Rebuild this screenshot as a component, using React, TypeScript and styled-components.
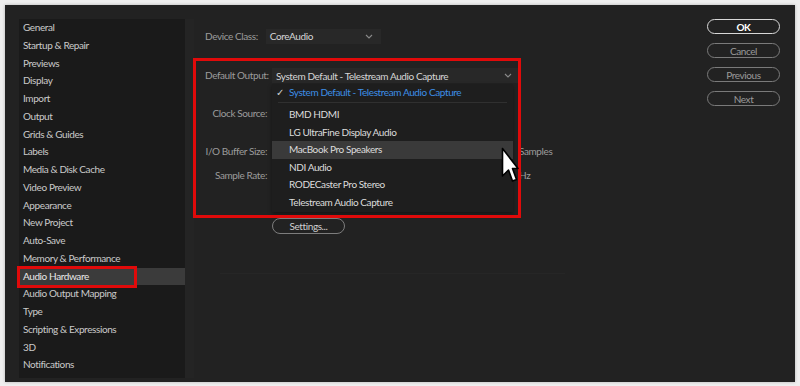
import styled, { createGlobalStyle } from "styled-components";

const GlobalStyle = createGlobalStyle`
  html, body {
    margin: 0;
    padding: 0;
    background: #efefef;
  }
  body {
    font-family: Lato, "Open Sans", "Noto Sans", sans-serif;
    letter-spacing: -0.4px;
    -webkit-font-smoothing: antialiased;
  }
`;

const sections = [
  "General",
  "Startup & Repair",
  "Previews",
  "Display",
  "Import",
  "Output",
  "Grids & Guides",
  "Labels",
  "Media & Disk Cache",
  "Video Preview",
  "Appearance",
  "New Project",
  "Auto-Save",
  "Memory & Performance",
  "Audio Hardware",
  "Audio Output Mapping",
  "Type",
  "Scripting & Expressions",
  "3D",
  "Notifications",
];

const devices = [
  "BMD HDMI",
  "LG UltraFine Display Audio",
  "MacBook Pro Speakers",
  "NDI Audio",
  "RODECaster Pro Stereo",
  "Telestream Audio Capture",
];

function Chevron() {
  return (
    <svg width="8" height="5" viewBox="0 0 8 5">
      <path d="M1 1 L4 4 L7 1" fill="none" stroke="#8a8a8a" strokeWidth="1.1" />
    </svg>
  );
}

function App() {
  const active = "Audio Hardware";
  const hovered = "MacBook Pro Speakers";

  return (
    <>
      <GlobalStyle />
      <Page>
        <Window>
          <Sidebar>
            {sections.map((s) => (
              <SideItem key={s} $active={s === active}>
                {s}
                {s === active && <SideMark />}
              </SideItem>
            ))}
          </Sidebar>

          <Content>
            <DeviceRow>
              <Label>Device Class:</Label>
              <Select $w={115}>
                <span>CoreAudio</span>
                <Chevron />
              </Select>
            </DeviceRow>

            <FormGrid>
              <FieldLabel>Default Output:</FieldLabel>
              <OutputCell>
                <Select $w={248}>
                  <span>System Default - Telestream Audio Capture</span>
                  <Chevron />
                </Select>
                <Menu>
                  <CheckedItem>
                    <Check>✓</Check>System Default - Telestream Audio Capture
                  </CheckedItem>
                  <MenuSep />
                  {devices.map((d) => (
                    <MenuItem key={d} $hover={d === hovered}>
                      {d}
                    </MenuItem>
                  ))}
                </Menu>
              </OutputCell>

              <FieldLabel $top={23}>Clock Source:</FieldLabel>
              <Spacer $top={23} />

              <FieldLabel $top={23}>I/O Buffer Size:</FieldLabel>
              <UnitCell $top={23}>Samples</UnitCell>

              <FieldLabel $top={9}>Sample Rate:</FieldLabel>
              <UnitCell $top={9}>Hz</UnitCell>
            </FormGrid>

            <SettingsButton>Settings...</SettingsButton>
            <FaintRule />

            <RedBox />
            <Cursor viewBox="0 0 18 36" width="18" height="36">
              <path
                d="M1.5 1.5 L1.5 29 L7.5 23 L11.5 34 L15.5 32.5 L11.5 21.5 L17 21.5 Z"
                fill="#ffffff"
                stroke="#000000"
                strokeWidth="1.6"
                strokeLinejoin="round"
              />
            </Cursor>
          </Content>

          <Buttons>
            <PillButton $primary>OK</PillButton>
            <PillButton>Cancel</PillButton>
            <PillButton>Previous</PillButton>
            <PillButton>Next</PillButton>
          </Buttons>
        </Window>
      </Page>
    </>
  );
}

export default App;

const Page = styled.div`
  width: 800px;
  height: 386px;
  padding: 5px 5px 4px 5px;
  box-sizing: border-box;
  display: flex;
`;

const Window = styled.div`
  flex: 1;
  display: flex;
  background: #222222;
  padding: 14px 14px 4px 14px;
  box-shadow: 0 0 3px rgba(0, 0, 0, 0.25);
  overflow: hidden;
`;

const Sidebar = styled.div`
  width: 166px;
  background: #1a1a1a;
  display: flex;
  flex-direction: column;
`;

const SideItem = styled.div<{ $active?: boolean }>`
  position: relative;
  height: 17.75px;
  line-height: 17.75px;
  padding-left: 4px;
  font-size: 10px;
  color: ${(p) => (p.$active ? "#e8e8e8" : "#cacaca")};
  background: ${(p) => (p.$active ? "#3b3b3b" : "transparent")};
  white-space: nowrap;
`;

const SideMark = styled.div`
  position: absolute;
  left: -2px;
  top: -2px;
  width: 114px;
  height: 16px;
  border: 3px solid #e00a0a;
`;

const Content = styled.div`
  flex: 1;
  position: relative;
  padding: 10px 0 0 11px;
  border-left: 9px solid #242424;
  font-size: 10px;
`;

const DeviceRow = styled.div`
  display: flex;
  align-items: center;
  gap: 8px;
  height: 14px;
`;

const Label = styled.div`
  color: #9c9c9c;
  font-size: 10px;
  white-space: nowrap;
`;

const Select = styled.div<{ $w: number }>`
  width: ${(p) => p.$w}px;
  height: 15px;
  box-sizing: border-box;
  padding: 0 8px 0 4px;
  background: #282828;
  color: #d6d6d6;
  font-size: 10px;
  display: flex;
  align-items: center;
  justify-content: space-between;
  white-space: nowrap;
`;

const FormGrid = styled.div`
  display: grid;
  grid-template-columns: 62px auto;
  column-gap: 5px;
  margin-top: 25px;
  align-items: center;
`;

const FieldLabel = styled(Label)<{ $top?: number }>`
  text-align: right;
  margin-top: ${(p) => p.$top || 0}px;
  height: 15px;
  line-height: 15px;
`;

const OutputCell = styled.div`
  position: relative;
  height: 15px;
`;

const Spacer = styled.div<{ $top?: number }>`
  margin-top: ${(p) => p.$top || 0}px;
  height: 15px;
`;

const UnitCell = styled.div<{ $top?: number }>`
  margin-top: ${(p) => p.$top || 0}px;
  height: 15px;
  line-height: 15px;
  padding-left: 247px;
  color: #9c9c9c;
  font-size: 10px;
`;

const Menu = styled.div`
  position: absolute;
  left: 0;
  top: 16px;
  width: 241px;
  height: 128px;
  background: #1e1e1e;
  box-shadow: 0 2px 4px rgba(0, 0, 0, 0.4);
  z-index: 2;
`;

const CheckedItem = styled.div`
  height: 17px;
  line-height: 17px;
  padding-left: 4px;
  color: #3d8ee6;
  font-size: 10px;
  white-space: nowrap;
`;

const Check = styled.span`
  display: inline-block;
  width: 13px;
  color: #cfcfcf;
  font-size: 10px;
`;

const MenuSep = styled.div`
  height: 1px;
  margin: 1px 6px 3px 6px;
  background: #303030;
`;

const MenuItem = styled.div<{ $hover?: boolean }>`
  height: 17.6px;
  line-height: 17.6px;
  padding-left: 17px;
  color: #dcdcdc;
  font-size: 10px;
  background: ${(p) => (p.$hover ? "#3a3a3a" : "transparent")};
  white-space: nowrap;
`;

const SettingsButton = styled.div`
  margin: 35px 0 0 67px;
  width: 73px;
  height: 16px;
  box-sizing: border-box;
  border: 1.5px solid #7d7d7d;
  border-radius: 8px;
  color: #d0d0d0;
  font-size: 10px;
  display: flex;
  align-items: center;
  justify-content: center;
`;

const FaintRule = styled.div`
  margin: 39px 0 0 15px;
  width: 345px;
  height: 1px;
  background: #262626;
`;

const RedBox = styled.div`
  position: absolute;
  left: -1px;
  top: 39px;
  width: 322px;
  height: 154px;
  border: 3px solid #e00a0a;
  z-index: 3;
  pointer-events: none;
`;

const Cursor = styled.svg`
  position: absolute;
  left: 307px;
  top: 128px;
  z-index: 4;
`;

const Buttons = styled.div`
  width: 73px;
  display: flex;
  flex-direction: column;
  gap: 9px;
  padding-right: 1px;
`;

const PillButton = styled.div<{ $primary?: boolean }>`
  height: 15px;
  box-sizing: border-box;
  border: 1.5px solid ${(p) => (p.$primary ? "#d8d8d8" : "#7a7a7a")};
  border-radius: 8px;
  color: ${(p) => (p.$primary ? "#ffffff" : "#9a9a9a")};
  font-weight: ${(p) => (p.$primary ? 700 : 400)};
  font-size: 10px;
  display: flex;
  align-items: center;
  justify-content: center;
`;
